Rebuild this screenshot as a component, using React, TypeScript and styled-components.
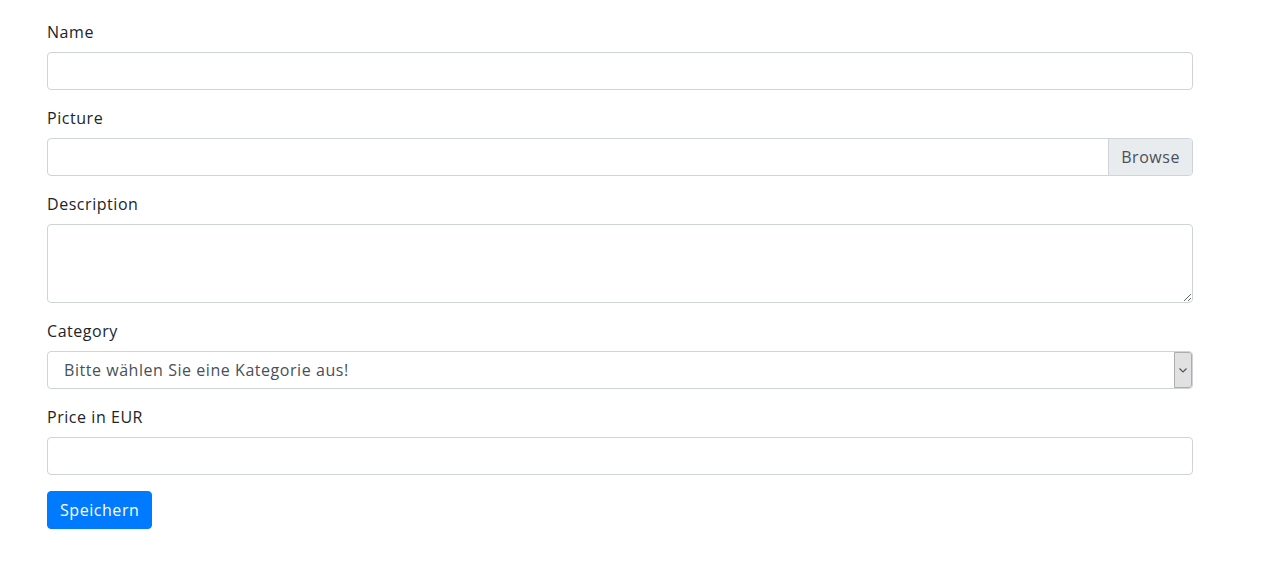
import React from 'react';
import styled, {createGlobalStyle} from "styled-components";

const GlobalStyle = createGlobalStyle`
  body {
    margin: 0;
    background: #fff;
    font-family: "Open Sans", "Liberation Sans", sans-serif;
    letter-spacing: 0.55px;
    color: #212529;
  }
  * { box-sizing: border-box; }
`

const Form = styled.form`
  width: 1146px;
  margin-left: 47px;
  padding-top: 20px;
  display: flex;
  flex-direction: column;
`

const Group = styled.div`
  display: flex;
  flex-direction: column;
  margin-bottom: 16px;
`

const Label = styled.label`
  font-size: 16px;
  line-height: 24px;
  margin-bottom: 8px;
  color: #212529;
`

const Input = styled.input`
  height: 38px;
  width: 100%;
  border: 1px solid #ced4da;
  border-radius: 4px;
  padding: 6px 12px;
  font: inherit;
  font-size: 16px;
  color: #495057;
  outline: none;
`

const FileBox = styled.div`
  display: flex;
  height: 38px;
  border: 1px solid #ced4da;
  border-radius: 4px;
  overflow: hidden;
`

const FileName = styled.div`
  flex: 1;
`

const BrowseBtn = styled.span`
  display: flex;
  align-items: center;
  padding: 0 12px;
  background: #e9ecef;
  border-left: 1px solid #ced4da;
  color: #495057;
  font-size: 16px;
`

const TextArea = styled.textarea`
  height: 79px;
  width: 100%;
  border: 1px solid #ced4da;
  border-radius: 4px;
  padding: 6px 12px;
  font: inherit;
  color: #495057;
  outline: none;
`

const SelectBox = styled.div`
  display: flex;
  height: 38px;
  border: 1px solid #ced4da;
  border-radius: 4px;
  overflow: hidden;
`

const SelectText = styled.div`
  flex: 1;
  display: flex;
  align-items: center;
  padding-left: 16px;
  font-size: 16px;
  color: #495057;
`

const Arrow = styled.div`
  width: 18px;
  display: flex;
  align-items: center;
  justify-content: center;
  background: #e1e1e1;
  border: 1px solid #adadad;
  border-radius: 0 3px 3px 0;
`

const Button = styled.button`
  align-self: flex-start;
  height: 38px;
  padding: 6px 12px;
  border: 1px solid #007bff;
  border-radius: 4px;
  background: #007bff;
  color: #fff;
  font: inherit;
  font-size: 16px;
  letter-spacing: inherit;
`

export default function App() {
    return (
        <>
            <GlobalStyle/>
            <Form>
                <Group>
                    <Label>Name</Label>
                    <Input type="text"/>
                </Group>
                <Group>
                    <Label>Picture</Label>
                    <FileBox>
                        <FileName/>
                        <BrowseBtn>Browse</BrowseBtn>
                    </FileBox>
                </Group>
                <Group>
                    <Label>Description</Label>
                    <TextArea/>
                </Group>
                <Group>
                    <Label>Category</Label>
                    <SelectBox>
                        <SelectText>Bitte wählen Sie eine Kategorie aus!</SelectText>
                        <Arrow>
                            <svg width="8" height="5" viewBox="0 0 8 5">
                                <path d="M0.5 0.5 L4 4 L7.5 0.5" fill="none" stroke="#555" strokeWidth="1.2"/>
                            </svg>
                        </Arrow>
                    </SelectBox>
                </Group>
                <Group>
                    <Label>Price in EUR</Label>
                    <Input type="text"/>
                </Group>
                <Button type="button">Speichern</Button>
            </Form>
        </>
    );
}
